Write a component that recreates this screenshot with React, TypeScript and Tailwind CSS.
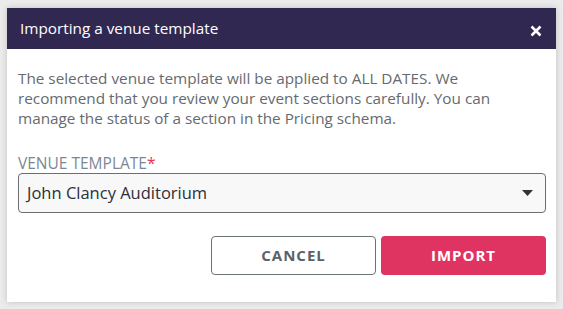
import React from "react";

export default function App() {
  return (
    <div className="w-[563px] h-[309px] bg-[#ebebeb] pt-[8px] pl-[7px]" style={{ fontFamily: '"Open Sans", sans-serif' }}>
      <div className="w-[549px] h-[294px] bg-white shadow-[0_0_6px_rgba(0,0,0,0.18)] flex flex-col">
        <div className="h-[41px] bg-[#302851] flex items-center justify-between pl-[13px] pr-[14px]">
          <span className="text-white text-[15.3px] leading-none">Importing a venue template</span>
          <svg width="12" height="12" viewBox="0 0 12 12" className="mt-[4px]">
            <path d="M1.5 1.5 L10.5 10.5 M10.5 1.5 L1.5 10.5" stroke="white" strokeWidth="2.6" strokeLinecap="butt" />
          </svg>
        </div>
        <div className="pl-[11px] pr-[10px] pt-[19px] flex flex-col">
          <p className="text-[15.3px] leading-[20px] text-[#666a6e]">
            The selected venue template will be applied to ALL DATES. We recommend that you review your event sections carefully. You can manage the status of a section in the Pricing schema.
          </p>
          <div className="mt-[25px] text-[15.5px] leading-[20px] text-[#7b8794] uppercase">
            Venue Template<span className="text-[#e8344e]">*</span>
          </div>
          <div className="h-[40px] border border-[#6b6f73] rounded-[4px] bg-[#f8f8f8] flex items-center justify-between pl-[8px] pr-[12px]">
            <span className="text-[16.5px] text-[#2c2f3a]">John Clancy Auditorium</span>
            <svg width="11" height="6" viewBox="0 0 11 6">
              <path d="M0 0 L11 0 L5.5 6 Z" fill="#333" />
            </svg>
          </div>
          <div className="mt-[23px] flex justify-end gap-[5px]">
            <button className="w-[165px] h-[39px] border border-[#6b7275] rounded-[4px] bg-white text-[15px] font-bold tracking-[1px] text-[#5a6268]">
              CANCEL
            </button>
            <button className="w-[165px] h-[39px] rounded-[4px] bg-[#df3461] text-[15px] font-bold tracking-[1px] text-white">
              IMPORT
            </button>
          </div>
        </div>
      </div>
    </div>
  );
}
